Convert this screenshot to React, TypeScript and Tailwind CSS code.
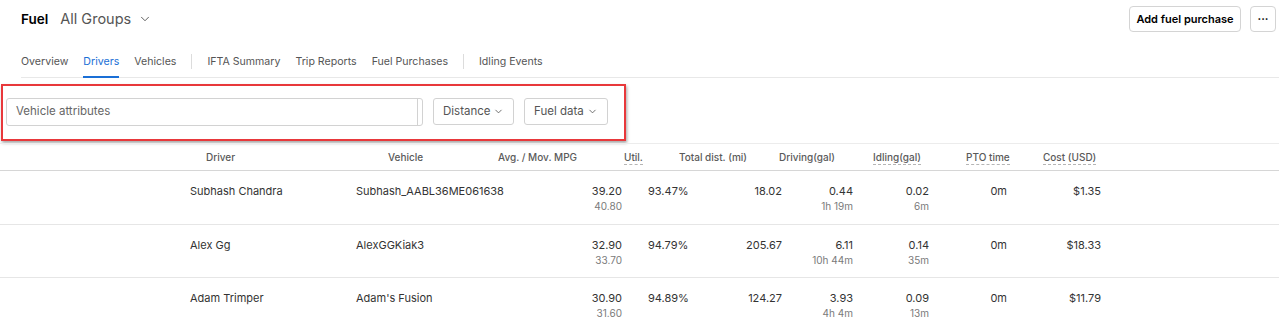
import React from 'react';
import { ChevronDown } from 'lucide-react';

type Row = {
  driver: string;
  vehicle: string;
  mpg: string;
  movMpg: string;
  util: string;
  dist: string;
  driving: string;
  drivingTime: string;
  idling: string;
  idlingTime: string;
  pto: string;
  cost: string;
};

const rows: Row[] = [
  {
    driver: 'Subhash Chandra',
    vehicle: 'Subhash_AABL36ME061638',
    mpg: '39.20',
    movMpg: '40.80',
    util: '93.47%',
    dist: '18.02',
    driving: '0.44',
    drivingTime: '1h 19m',
    idling: '0.02',
    idlingTime: '6m',
    pto: '0m',
    cost: '$1.35',
  },
  {
    driver: 'Alex Gg',
    vehicle: 'AlexGGKiak3',
    mpg: '32.90',
    movMpg: '33.70',
    util: '94.79%',
    dist: '205.67',
    driving: '6.11',
    drivingTime: '10h 44m',
    idling: '0.14',
    idlingTime: '35m',
    pto: '0m',
    cost: '$18.33',
  },
  {
    driver: 'Adam Trimper',
    vehicle: "Adam's Fusion",
    mpg: '30.90',
    movMpg: '31.60',
    util: '94.89%',
    dist: '124.27',
    driving: '3.93',
    drivingTime: '4h 4m',
    idling: '0.09',
    idlingTime: '13m',
    pto: '0m',
    cost: '$11.79',
  },
];

const Sub: React.FC<{ children?: React.ReactNode }> = ({ children }) => (
  <div className="mt-[1px] text-[10px] leading-[14px] text-[#7a7a7a]">{children}</div>
);

const Dashed: React.FC<{ children: React.ReactNode }> = ({ children }) => (
  <span className="border-b border-dashed border-[#b5b5b5] pb-[1px]">{children}</span>
);

const App: React.FC = () => {
  return (
    <div className="h-[331px] w-[1279px] overflow-hidden bg-white font-['Inter',sans-serif] text-[#333]">
      {/* title bar */}
      <div className="flex h-[26px] items-center justify-between pl-[21px] pr-[3px] mt-[6px]">
        <div className="flex items-center">
          <span className="text-[13.5px] font-semibold text-black">Fuel</span>
          <span className="ml-[12px] text-[14.5px] text-[#555]">All Groups</span>
          <ChevronDown className="ml-[7px] h-[14px] w-[14px] text-[#555]" strokeWidth={1.6} />
        </div>
        <div className="flex items-center gap-[9px]">
          <button className="h-[26px] w-[112px] rounded-[4px] border border-[#d4d4d4] text-[11px] font-semibold text-black">
            Add fuel purchase
          </button>
          <button className="flex h-[26px] w-[26px] items-center justify-center rounded-[4px] border border-[#d4d4d4] text-[11px] font-bold text-black">
            ···
          </button>
        </div>
      </div>

      {/* tabs */}
      <nav className="ml-[21px] mt-[10px] flex h-[36px] items-stretch gap-[15px] border-b border-[#e8e8e8] text-[10.6px] text-[#555]">
        <div className="flex items-center pt-[4px]">Overview</div>
        <div className="-mb-px flex items-center border-b-2 border-[#1a6fd6] pt-[5px] text-[#1a6fd6]">Drivers</div>
        <div className="flex items-center pt-[4px]">Vehicles</div>
        <div className="mb-[8px] mt-[12px] w-px bg-[#dcdcdc]" />
        <div className="flex items-center pt-[4px]">IFTA Summary</div>
        <div className="flex items-center pt-[4px]">Trip Reports</div>
        <div className="flex items-center pt-[4px]">Fuel Purchases</div>
        <div className="mb-[8px] mt-[12px] w-px bg-[#dcdcdc]" />
        <div className="flex items-center pt-[4px]">Idling Events</div>
      </nav>

      {/* filters */}
      <div className="ml-[1px] mt-[6px] flex h-[57px] w-[625px] items-start border-2 border-[#e8383b] pl-[3px] pt-[12px] shadow-[1px_2px_3px_rgba(0,0,0,0.35)]">
        <div className="flex h-[28px] w-[417px] rounded-[3px] border border-[#d2d2d2]">
          <div className="flex w-[411px] items-center border-r border-[#d2d2d2] pl-[9px] text-[11.5px] text-[#666]">
            Vehicle attributes
          </div>
        </div>
        <button className="ml-[10px] flex h-[27px] w-[81px] items-center justify-between rounded-[3px] border border-[#d2d2d2] px-[9px] text-[11.5px] text-[#555]">
          Distance
          <ChevronDown className="h-[11px] w-[11px]" strokeWidth={1.8} />
        </button>
        <button className="ml-[10px] flex h-[27px] w-[84px] items-center justify-between rounded-[3px] border border-[#d2d2d2] px-[9px] text-[11.5px] text-[#555]">
          Fuel data
          <ChevronDown className="h-[11px] w-[11px]" strokeWidth={1.8} />
        </button>
      </div>

      {/* table header */}
      <div className="mt-[2px] grid h-[28px] grid-cols-[182px_110px_126px_55px_100px_94px_93px_77px_1fr] items-center border-y border-t-[#ececec] border-b-[#d6d6d6] pl-[206px] text-[10px] font-medium text-[#5a5a5a]">
        <div>Driver</div>
        <div>Vehicle</div>
        <div>Avg. / Mov. MPG</div>
        <div><Dashed>Util.</Dashed></div>
        <div>Total dist. (mi)</div>
        <div>Driving(gal)</div>
        <div><Dashed>Idling(gal)</Dashed></div>
        <div><Dashed>PTO time</Dashed></div>
        <div><Dashed>Cost (USD)</Dashed></div>
      </div>

      {/* rows */}
      {rows.map((r) => (
        <div
          key={r.driver}
          className="grid h-[53.5px] grid-cols-[166px_137px_129px_78px_82px_71px_77px_77px_94px] border-b border-[#e6e6e6] pl-[190px] pt-[13px] text-[11px] leading-[14px] text-[#333]"
        >
          <div>{r.driver}</div>
          <div>{r.vehicle}</div>
          <div className="text-right">
            <div>{r.mpg}</div>
            <Sub>{r.movMpg}</Sub>
          </div>
          <div className="pl-[26px]">{r.util}</div>
          <div className="text-right">{r.dist}</div>
          <div className="text-right">
            <div>{r.driving}</div>
            <Sub>{r.drivingTime}</Sub>
          </div>
          <div className="pr-[1px] text-right">
            <div>{r.idling}</div>
            <Sub>{r.idlingTime}</Sub>
          </div>
          <div className="text-right">{r.pto}</div>
          <div className="text-right">{r.cost}</div>
        </div>
      ))}
    </div>
  );
};

export default App;
